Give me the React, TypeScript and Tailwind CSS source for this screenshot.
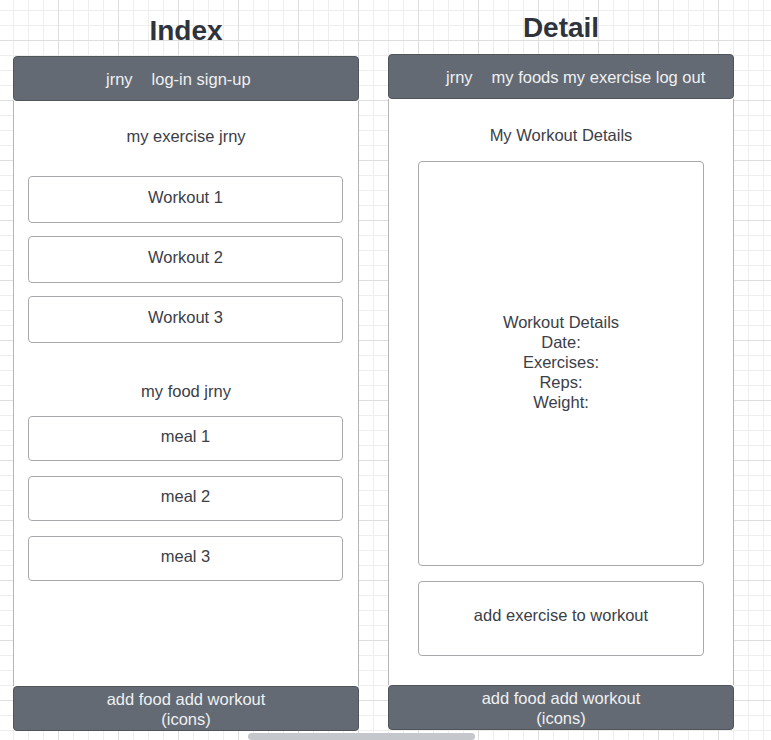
import React from "react";

const font = "font-['Liberation_Sans',Arial,sans-serif]";

function Bar({ children, className = "" }: { children: React.ReactNode; className?: string }) {
  return (
    <div
      className={`h-[45px] rounded-[4px] border border-[#50555c] bg-[#646a73] text-[16.5px] leading-[20px] text-[#eef0f2] ${className}`}
    >
      {children}
    </div>
  );
}

function Box({ label, className = "" }: { label: string; className?: string }) {
  return (
    <div className={`rounded-[4px] border border-[#a9a9ad] bg-white text-center ${className}`}>
      {label}
    </div>
  );
}

function Footer() {
  return (
    <Bar className="flex flex-col items-center justify-center">
      <span>add food add workout</span>
      <span>(icons)</span>
    </Bar>
  );
}

export default function App() {
  return (
    <div
      className={`relative h-[740px] w-[771px] overflow-hidden bg-white ${font} text-[#3b4048] bg-[linear-gradient(to_right,#dedede_1px,transparent_1px),linear-gradient(to_bottom,#dedede_1px,transparent_1px),linear-gradient(to_right,#eeeeee_1px,transparent_1px),linear-gradient(to_bottom,#eeeeee_1px,transparent_1px)] [background-size:60px_60px,60px_60px,15px_15px,15px_15px] [background-position:58px_40px]`}
    >
      <div className="flex gap-[29px] pl-[13px]">
        {/* Index */}
        <div className="flex w-[346px] flex-col">
          <h1 className="flex h-[56px] items-center justify-center pt-[5px] text-[28px] font-bold text-[#2f343c]">
            Index
          </h1>
          <div className="flex h-[675px] flex-col">
            <Bar className="flex items-center pl-[92px]">
              <span>jrny</span>
              <span className="ml-[19px]">log-in sign-up</span>
            </Bar>
            <div className="flex flex-1 flex-col border-x border-[#b6b6ba] bg-white px-[14px] pt-[25px] text-[16.5px] leading-[20px]">
              <p className="text-center">my exercise jrny</p>
              <div className="mt-[30px] flex flex-col gap-[13px] pr-px">
                <Box label="Workout 1" className="h-[47px] pt-[10px]" />
                <Box label="Workout 2" className="h-[47px] pt-[10px]" />
                <Box label="Workout 3" className="h-[47px] pt-[10px]" />
              </div>
              <p className="mt-[38px] text-center">my food jrny</p>
              <div className="mt-[15px] flex flex-col gap-[15px] pr-px">
                <Box label="meal 1" className="h-[45px] pt-[9px]" />
                <Box label="meal 2" className="h-[45px] pt-[9px]" />
                <Box label="meal 3" className="h-[45px] pt-[9px]" />
              </div>
            </div>
            <Footer />
          </div>
        </div>

        {/* Detail */}
        <div className="flex w-[346px] flex-col">
          <h1 className="flex h-[54px] items-center justify-center pt-[2px] text-[28px] font-bold text-[#2f343c]">
            Detail
          </h1>
          <div className="flex h-[676px] flex-col">
            <Bar className="flex items-center pl-[57px]">
              <span>jrny</span>
              <span className="ml-[19px]">my foods my exercise log out</span>
            </Bar>
            <div className="flex flex-1 flex-col border-x border-[#b6b6ba] bg-white px-[29px] pt-[26px] text-[16.5px] leading-[20px]">
              <p className="text-center">My Workout Details</p>
              <div className="mt-[16px] flex h-[405px] flex-col items-center justify-center rounded-[4px] border border-[#a9a9ad] pb-[3px] text-center">
                <span>Workout Details</span>
                <span>Date:</span>
                <span>Exercises:</span>
                <span>Reps:</span>
                <span>Weight:</span>
              </div>
              <div className="mt-[15px] flex h-[75px] items-center justify-center rounded-[4px] border border-[#a9a9ad] pb-[7px]">
                add exercise to workout
              </div>
            </div>
            <Footer />
          </div>
        </div>
      </div>

      {/* scrollbar thumb */}
      <div className="absolute left-[248px] top-[733px] h-[7px] w-[227px] rounded-full bg-[#c4c7cc]" />
    </div>
  );
}
